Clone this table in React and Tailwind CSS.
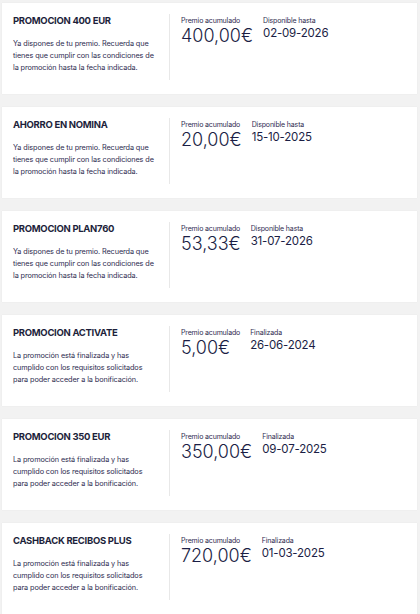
import React from "react";

// explicit lines so the wrap matches the design
const OK_LINES = [
  "Ya dispones de tu premio. Recuerda que",
  "tienes que cumplir con las condiciones de",
  "la promoción hasta la fecha indicada.",
];
const END_LINES = [
  "La promoción está finalizada y has",
  "cumplido con los requisitos solicitados",
  "para poder acceder a la bonificación.",
];

const promos = [
  { id: 1, title: "PROMOCION 400 EUR", lines: OK_LINES, amount: "400,00€", dateLabel: "Disponible hasta", date: "02-09-2026" },
  { id: 2, title: "AHORRO EN NOMINA", lines: OK_LINES, amount: "20,00€", dateLabel: "Disponible hasta", date: "15-10-2025" },
  { id: 3, title: "PROMOCION PLAN760", lines: OK_LINES, amount: "53,33€", dateLabel: "Disponible hasta", date: "31-07-2026" },
  { id: 4, title: "PROMOCION ACTIVATE", lines: END_LINES, amount: "5,00€", dateLabel: "Finalizada", date: "26-06-2024" },
  { id: 5, title: "PROMOCION 350 EUR", lines: END_LINES, amount: "350,00€", dateLabel: "Finalizada", date: "09-07-2025" },
  { id: 6, title: "CASHBACK RECIBOS PLUS", lines: END_LINES, amount: "720,00€", dateLabel: "Finalizada", date: "01-03-2025" },
];

const PromoCard = ({ promo }) => {
  return (
    <div className="flex h-[91px] bg-white pl-[11px] shadow-[0_0_1px_rgba(0,0,0,0.08)]">
      {/* Left: title + description */}
      <div className="w-[156px] shrink-0 pt-[12px]">
        <div className="whitespace-nowrap text-[9.5px] leading-[12px] font-bold tracking-[-0.3px] text-[#1d1f3b]">
          {promo.title}
        </div>
        <p className="mt-[11px] text-[7.3px] leading-[12.2px] tracking-[-0.1px] text-[#2e2b4f]">
          {promo.lines.map((line, i) => (
            <span key={i} className="block whitespace-nowrap">
              {line}
            </span>
          ))}
        </p>
      </div>

      {/* Divider */}
      <div className="mt-[11px] mb-[14px] w-px bg-[#e8e8e8]" />

      {/* Right: amount + date */}
      <div className="flex gap-[10px] pl-[11px] pt-[13px]">
        <div>
          <div className="whitespace-nowrap text-[7px] leading-[10px] tracking-[-0.15px] text-[#2e2b4f]">
            Premio acumulado
          </div>
          <div className="text-[18px] leading-[20px] font-light text-[#1b1e45]">
            {promo.amount}
          </div>
        </div>
        <div>
          <div className="whitespace-nowrap text-[7px] leading-[10px] tracking-[-0.15px] text-[#2e2b4f]">
            {promo.dateLabel}
          </div>
          <div className="text-[11.5px] leading-[15px] tracking-[-0.2px] text-[#1b1e45]">
            {promo.date}
          </div>
        </div>
      </div>
    </div>
  );
};

export default function App() {
  return (
    <div
      className="min-h-screen bg-[#f2f2f2] pt-[3px] pl-[2px] pr-[3px] flex flex-col gap-[13px]"
      style={{ fontFamily: "Inter, 'Open Sans', sans-serif" }}
    >
      {promos.map((promo) => (
        <PromoCard key={promo.id} promo={promo} />
      ))}
    </div>
  );
}
